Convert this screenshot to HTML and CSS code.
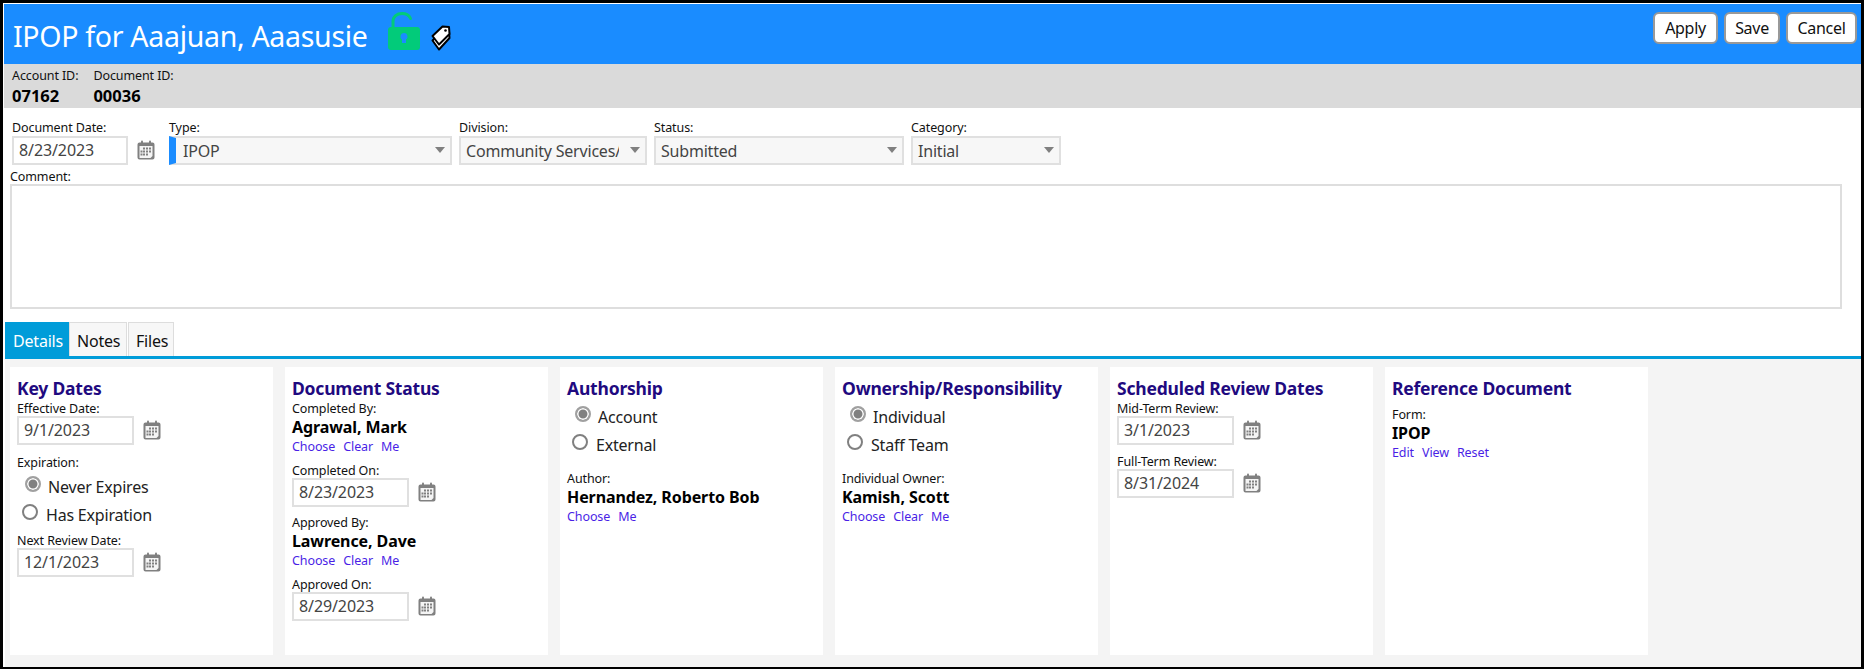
FILE: index.html
```html
<!DOCTYPE html>
<html lang="en">
<head>
<meta charset="utf-8">
<title>IPOP for Aaajuan, Aaasusie</title>
<link rel="stylesheet" href="styles.css">
</head>
<body>
<svg class="defs" width="0" height="0" aria-hidden="true">
  <symbol id="cal" viewBox="0 0 18 20">
    <path d="M2.5 2.5h13a2 2 0 0 1 2 2v13a2 2 0 0 1-2 2h-13a2 2 0 0 1-2-2v-13a2 2 0 0 1 2-2z" fill="#808080"/>
    <rect x="4" y="0.5" width="2" height="4" rx="1" fill="#808080"/>
    <rect x="12" y="0.5" width="2" height="4" rx="1" fill="#808080"/>
    <path d="M2.5 6h13v10l-2 2h-11z" fill="#f4f4f4"/>
    <g fill="#808080">
      <rect x="6" y="7.5" width="2" height="2"/><rect x="9" y="7.5" width="2" height="2"/><rect x="12" y="7.5" width="2" height="2"/>
      <rect x="3.500" y="10.500" width="2" height="2"/><rect x="6" y="10.500" width="2" height="2"/><rect x="9" y="10.500" width="2" height="2"/><rect x="12" y="10.500" width="2" height="2"/>
      <rect x="3.500" y="13.500" width="2" height="2"/><rect x="6" y="13.500" width="2" height="2"/><rect x="9" y="13.500" width="2" height="2"/>
    </g>
  </symbol>
</svg>
<div class="frame">
  <header class="topbar">
    <h1 class="title">IPOP for Aaajuan, Aaasusie</h1>
    <svg class="lock" width="32" height="38" viewBox="0 0 32 38" aria-hidden="true">
      <path d="M5 16V9.500C5 4.500 9 1.500 14 1.500c4 0 7 1.500 8.500 5" fill="none" stroke="#02cb7a" stroke-width="3" stroke-linecap="round"/>
      <path d="M3 15h26a3 3 0 0 1 3 3v17a3 3 0 0 1-3 3H3a3 3 0 0 1-3-3V18a3 3 0 0 1 3-3z" fill="#02cb7a"/>
      <path d="M16 21a3.500 3.500 0 0 1 2 6.400V31h-4v-3.600A3.500 3.500 0 0 1 16 21z" fill="#1a8cff"/>
    </svg>
    <svg class="tag" width="20" height="26" viewBox="0 0 20 26" aria-hidden="true">
      <path d="M1.500 15.500 12 5l6 1.500 0.500 6.500L8 24.500z" fill="#fff" stroke="#000" stroke-width="2" stroke-linejoin="round"/>
      <path d="M1.500 11 11.500 1.500 18 2l0.500 7L8 19.500z" fill="#fff" stroke="#000" stroke-width="2" stroke-linejoin="round"/>
      <circle cx="14.500" cy="5.500" r="1.300" fill="#000"/>
    </svg>
    <div class="actions">
      <button class="btn" type="button">Apply</button>
      <button class="btn" type="button">Save</button>
      <button class="btn" type="button">Cancel</button>
    </div>
  </header>

  <section class="infobar">
    <div class="info"><div class="label">Account ID:</div><div class="info-value">07162</div></div>
    <div class="info"><div class="label">Document ID:</div><div class="info-value">00036</div></div>
  </section>

  <section class="docform">
    <div class="docrow">
      <div class="field w-date">
        <div class="label">Document Date:</div>
        <div class="dateline"><div class="input narrow">8/23/2023</div><svg class="calicon"><use href="#cal"/></svg></div>
      </div>
      <div class="field w-type">
        <div class="label">Type:</div>
        <div class="select marked"><span class="select-text">IPOP</span><i class="arrow"></i></div>
      </div>
      <div class="field w-div">
        <div class="label">Division:</div>
        <div class="select"><span class="select-text">Community Services/</span><i class="arrow"></i></div>
      </div>
      <div class="field w-status">
        <div class="label">Status:</div>
        <div class="select"><span class="select-text">Submitted</span><i class="arrow"></i></div>
      </div>
      <div class="field w-cat">
        <div class="label">Category:</div>
        <div class="select"><span class="select-text">Initial</span><i class="arrow"></i></div>
      </div>
    </div>
    <div class="label comment-label">Comment:</div>
    <div class="comment"></div>
  </section>

  <nav class="tabs">
    <div class="tab active">Details</div>
    <div class="tab">Notes</div>
    <div class="tab">Files</div>
  </nav>

  <main class="panel">
    <section class="card">
      <h2 class="card-title">Key Dates</h2>
      <div class="label">Effective Date:</div>
      <div class="dateline"><div class="input">9/1/2023</div><svg class="calicon"><use href="#cal"/></svg></div>
      <div class="label mt9">Expiration:</div>
      <div class="radio-row"><span class="radio on"></span><span>Never Expires</span></div>
      <div class="radio-row"><span class="radio"></span><span>Has Expiration</span></div>
      <div class="label mt6">Next Review Date:</div>
      <div class="dateline"><div class="input">12/1/2023</div><svg class="calicon"><use href="#cal"/></svg></div>
    </section>

    <section class="card">
      <h2 class="card-title">Document Status</h2>
      <div class="label">Completed By:</div>
      <div class="name">Agrawal, Mark</div>
      <div class="links"><a>Choose</a><a>Clear</a><a>Me</a></div>
      <div class="label mt7">Completed On:</div>
      <div class="dateline"><div class="input">8/23/2023</div><svg class="calicon"><use href="#cal"/></svg></div>
      <div class="label mt7">Approved By:</div>
      <div class="name">Lawrence, Dave</div>
      <div class="links"><a>Choose</a><a>Clear</a><a>Me</a></div>
      <div class="label mt7">Approved On:</div>
      <div class="dateline"><div class="input">8/29/2023</div><svg class="calicon"><use href="#cal"/></svg></div>
    </section>

    <section class="card">
      <h2 class="card-title">Authorship</h2>
      <div class="radio-group">
        <div class="radio-row"><span class="radio on"></span><span>Account</span></div>
        <div class="radio-row"><span class="radio"></span><span>External</span></div>
      </div>
      <div class="label mt14">Author:</div>
      <div class="name">Hernandez, Roberto Bob</div>
      <div class="links"><a>Choose</a><a>Me</a></div>
    </section>

    <section class="card">
      <h2 class="card-title">Ownership/Responsibility</h2>
      <div class="radio-group">
        <div class="radio-row"><span class="radio on"></span><span>Individual</span></div>
        <div class="radio-row"><span class="radio"></span><span>Staff Team</span></div>
      </div>
      <div class="label mt14">Individual Owner:</div>
      <div class="name">Kamish, Scott</div>
      <div class="links"><a>Choose</a><a>Clear</a><a>Me</a></div>
    </section>

    <section class="card">
      <h2 class="card-title">Scheduled Review Dates</h2>
      <div class="label">Mid-Term Review:</div>
      <div class="dateline"><div class="input">3/1/2023</div><svg class="calicon"><use href="#cal"/></svg></div>
      <div class="label mt8">Full-Term Review:</div>
      <div class="dateline"><div class="input">8/31/2024</div><svg class="calicon"><use href="#cal"/></svg></div>
    </section>

    <section class="card">
      <h2 class="card-title">Reference Document</h2>
      <div class="label mt8">Form:</div>
      <div class="name">IPOP</div>
      <div class="links"><a>Edit</a><a>View</a><a>Reset</a></div>
    </section>
  </main>
</div>
</body>
</html>
```

FILE: styles.css
```css
* { box-sizing: border-box; }
html, body { margin: 0; padding: 0; }
body {
  width: 1864px;
  height: 669px;
  overflow: hidden;
  font-family: "Noto Sans", "Open Sans", sans-serif;
  color: #000;
  background: #fff;
}
.defs { position: absolute; }
.frame {
  width: 1864px;
  height: 669px;
  display: flex;
  flex-direction: column;
  border: solid #000;
  border-width: 3px 3px 2px 3px;
  padding: 1px 0 0 1px;
  background: #fff;
}

/* header */
.topbar {
  height: 60px;
  flex: none;
  display: flex;
  background: #1a8cff;
  padding-left: 9px;
}
.title {
  margin: 0;
  padding-top: 14px;
  font-size: 28.5px;
  line-height: 36px;
  font-weight: 400;
  letter-spacing: -0.3px;
  color: #fff;
}
.lock { margin: 8px 0 0 20px; }
.tag { margin: 21px 0 0 11px; }
.actions { margin-left: auto; display: flex; gap: 6px; padding: 8px 4px 0 0; height: 40px; }
.btn {
  height: 32px;
  padding: 0;
  border: 2px solid #999;
  border-radius: 6px;
  background: #fff;
  font: 400 16px/28px "Noto Sans", sans-serif;
  color: #111;
  letter-spacing: -0.3px;
}
.btn:nth-child(1) { width: 65px; }
.btn:nth-child(2) { width: 56px; }
.btn:nth-child(3) { width: 71px; }

/* info */
.infobar {
  height: 44px;
  flex: none;
  display: flex;
  gap: 15px;
  padding: 3px 8px 0;
  background: #dadada;
}
.label {
  font-size: 12.500px;
  line-height: 18px;
  margin-bottom: -2px;
  color: #111;
  white-space: nowrap;
  letter-spacing: -0.1px;
}
.info-value { font-size: 16.500px; font-weight: 700; line-height: 24px; margin-top: 1px; }

/* doc form */
.docform { height: 214px; flex: none; padding: 11px 0 0 6px; }
.docrow { display: flex; gap: 7px; padding-left: 2px; }
.w-date { width: 150px; }
.w-type { width: 283px; }
.w-div { width: 188px; }
.w-status { width: 250px; }
.w-cat { width: 150px; }
.field .label { margin-bottom: -1px; }
.dateline { display: flex; align-items: center; gap: 9px; }
.input {
  width: 117px;
  height: 29px;
  border: 2px solid #e0e0e0;
  background: #fff;
  padding-left: 5px;
  font-size: 16px;
  line-height: 25px;
  color: #444;
  letter-spacing: -0.1px;
}
.input.narrow { width: 116px; }
.calicon { width: 18px; height: 20px; flex: none; margin-top: -1px; }
.select {
  position: relative;
  height: 29px;
  border: 2px solid #e0e0e0;
  background: #f7f7f7;
  padding: 0 26px 0 5px;
  font-size: 16px;
  line-height: 27px;
  color: #444;
  letter-spacing: -0.2px;
  overflow: hidden;
}
.select.marked { border-left: 7px solid #1a8cff; padding-left: 7px; }
.select-text { display: block; white-space: nowrap; overflow: hidden; }
.arrow {
  position: absolute;
  right: 5px;
  top: 9px;
  border: 5px solid transparent;
  border-top: 6px solid #808080;
  border-bottom: 0;
}
.comment-label { margin-top: 3px; }
.comment { width: 1832px; height: 125px; border: 2px solid #dedede; background: #fff; }

/* tabs */
.tabs { display: flex; flex: none; height: 37px; margin-left: 1px; border-bottom: 3px solid #009cd9; gap: 1px; }
.tab {
  height: 34px;
  padding: 0 7px;
  font-size: 16px;
  line-height: 37px;
  letter-spacing: -0.2px;
  background: #f7f7f7;
  border: 1px solid #ddd;
  border-bottom: 0;
  color: #111;
}
.tab:nth-child(1) { width: 64px; margin-right: -1px; }
.tab:nth-child(2) { width: 58px; }
.tab:nth-child(3) { width: 46px; }
.tab.active { background: #009cd9; border-color: #009cd9; color: #fff; }

/* panel */
.panel {
  flex: 1;
  margin-left: 1px;
  display: grid;
  grid-template-columns: repeat(6, 263px);
  column-gap: 12px;
  padding: 8px 5px 12px;
  background: #f4f4f4;
}
.card { background: #fff; padding: 11px 7px 0; }
.card-title {
  margin: 0 0 2px;
  font-size: 17.500px;
  line-height: 20px;
  font-weight: 700;
  letter-spacing: -0.2px;
  color: #1f0a80;
  white-space: nowrap;
}
.name { font-size: 16px; line-height: 23px; font-weight: 700; letter-spacing: -0.1px; white-space: nowrap; }
.links { display: flex; gap: 8px; font-size: 12.500px; line-height: 16px; color: #4a1fe6; letter-spacing: -0.1px; }
.mt6 { margin-top: 6px; }
.mt7 { margin-top: 7px; }
.mt8 { margin-top: 8px; }
.mt9 { margin-top: 9px; }
.mt14 { margin-top: 14px; }
.radio-group { margin-top: 2px; }
.radio-row {
  height: 28px;
  display: flex;
  align-items: center;
  gap: 8px;
  padding: 6px 0 0 5px;
  font-size: 16px;
  letter-spacing: -0.2px;
  color: #222;
}
.radio {
  width: 16px;
  height: 16px;
  flex: none;
  margin-top: -6px;
  border: 2px solid #808080;
  border-radius: 50%;
  background: #fff;
}
.radio.on {
  margin-left: 3px;
  margin-right: -1px;
  border: 2px solid #a0a0a0;
  background: #808080;
  box-shadow: inset 0 0 0 1.500px #fff;
}
```
